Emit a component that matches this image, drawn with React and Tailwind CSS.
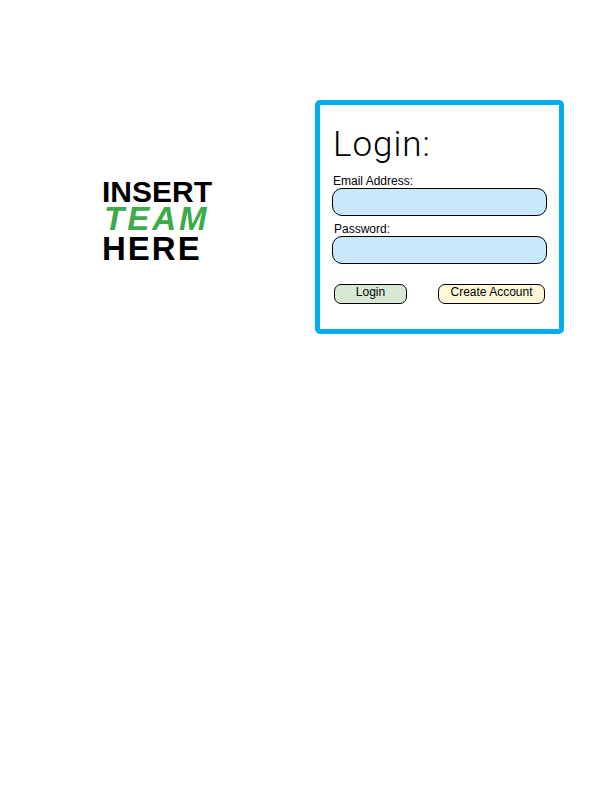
import React from "react";

export default function App() {
  return (
    <div className="min-h-[792px] w-[612px] bg-white" style={{ fontFamily: "'Liberation Sans', Arial, sans-serif" }}>
      <div className="flex pt-[100px]">
        {/* team logo */}
        <div className="w-[315px] pl-[102px] pt-[78px]">
          <div className="font-bold text-black">
            <div className="text-[30px] leading-[28px]">INSERT</div>
            <div className="pl-[2px] text-[33px] leading-[26px] tracking-[3px] italic text-[#3cab4b]">TEAM</div>
            <div className="text-[33px] leading-[34px] tracking-[2px]">HERE</div>
          </div>
        </div>

        {/* login box */}
        <div className="w-[249px] h-[234px] border-[5px] border-[#00aeef] rounded-[5px] px-[12px] pt-[20px]">
          <h1 className="pl-[1px] text-[35px] leading-[40px] tracking-[1px] font-light text-black" style={{ fontFamily: "Roboto, 'Liberation Sans', sans-serif" }}>
            Login:
          </h1>
          <label className="block pl-[1px] mt-[9px] text-[12px] leading-[14px] text-black">Email Address:</label>
          <div className="h-[28px] rounded-[10px] border border-black bg-[#c8e9f9]" />
          <label className="block pl-[2px] mt-[6px] text-[12px] leading-[14px] text-black">Password:</label>
          <div className="h-[28px] rounded-[10px] border border-black bg-[#c8e9f9]" />
          <div className="flex justify-between px-[2px] mt-[20px]">
            <button className="w-[73px] h-[20px] rounded-[7px] border border-black bg-[#d7e9d3] text-[12px] leading-[14px] pb-[4px] text-black">
              Login
            </button>
            <button className="w-[107px] h-[20px] rounded-[7px] border border-black bg-[#fdf8d7] text-[12px] leading-[14px] pb-[4px] text-black">
              Create Account
            </button>
          </div>
        </div>
      </div>
    </div>
  );
}
